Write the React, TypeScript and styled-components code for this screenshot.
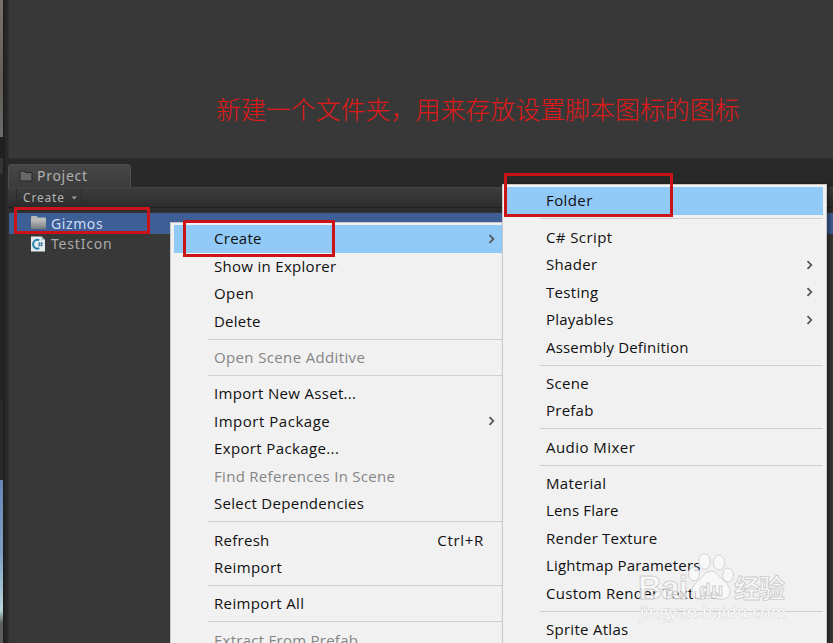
import React from 'react';
import styled, { createGlobalStyle } from 'styled-components';

const GlobalStyle = createGlobalStyle`
  * { box-sizing: border-box; }
  body { margin: 0; background: #292929; overflow: hidden; }
`;

const Editor = styled.div`
  position: relative;
  display: grid;
  grid-template-columns: 3px 5px 1fr;
  width: 833px;
  height: 643px;
  overflow: hidden;
  background: #292929;
  font-family: 'Noto Sans', sans-serif;
`;

const SceneEdge = styled.div`
  display: grid;
  grid-template-rows: 137px 21px 16px 227px 79px 1fr;
  height: 643px;
`;

const EdgeBlock = styled.div<{ $fill: string }>`
  background: ${p => p.$fill};
`;

const Gutter = styled.div`
  background: linear-gradient(90deg, #1c1c1c, #292929 70%);
`;

const Main = styled.div`
  display: flex;
  flex-direction: column;
  min-width: 0;
`;

const Preview = styled.div`
  height: 159px;
  flex: none;
  border-left: 1px solid #303030;
  border-bottom: 1px solid #2e2e2e;
  background: #383838;
`;

const Note = styled.p`
  margin: 0;
  padding: 89px 0 0 207px;
  color: #e01818;
  font: 300 24.95px/38px 'Noto Sans CJK SC', sans-serif;
  white-space: nowrap;
`;

const TabBar = styled.div`
  display: flex;
  align-items: flex-end;
  height: 28px;
  flex: none;
  background: #292929;
`;

const Tab = styled.div`
  display: flex;
  align-items: center;
  gap: 4px;
  width: 123px;
  height: 23px;
  padding: 0 0 0 10px;
  border: 1px solid #4e4e4e;
  border-bottom: 0;
  border-radius: 4px 4px 0 0;
  background: linear-gradient(#474747, #3b3b3b);
  color: #b0b0b0;
  font-size: 14px;
  line-height: 20px;
  letter-spacing: 0.72px;
`;

const Toolbar = styled.div`
  display: flex;
  height: 21px;
  flex: none;
  padding-left: 8px;
  border-top: 1px solid #434343;
  border-bottom: 1px solid #1f1f1f;
  background: linear-gradient(#3d3d3d, #2c2c2c);
`;

const ToolButton = styled.div`
  display: flex;
  align-items: center;
  gap: 6px;
  width: 66px;
  padding-left: 6px;
  border: solid #2b2b2b;
  border-width: 0 1px;
  color: #b4b4b4;
  font-size: 12px;
  letter-spacing: 0.8px;
`;

const AssetList = styled.div`
  flex: 1;
  padding-top: 5px;
  border-left: 1px solid #303030;
  background: linear-gradient(#2c2c2c 0 3px, #383838 6px);
`;

const AssetRow = styled.div<{ $selected?: boolean }>`
  display: flex;
  align-items: center;
  gap: 4px;
  height: 20.5px;
  padding-left: 21px;
  background: ${p => (p.$selected ? '#3e5f96' : 'transparent')};
  color: ${p => (p.$selected ? '#cddcf5' : '#aaaaaa')};
  font-size: 14px;
  letter-spacing: ${p => (p.$selected ? 0.6 : 0.8)}px;
  line-height: 20px;
`;

const AssetName = styled.span<{ $drop?: number }>`
  padding-top: ${p => p.$drop ?? 0}px;
`;

const Menu = styled.div`
  position: absolute;
  border: 1px solid #c9c9c9;
  background: #f1f1f1;
  color: #101010;
  font: 15px/27px 'Open Sans', sans-serif;
  overflow: hidden;
`;

const ContextMenu = styled(Menu)`
  left: 170px;
  top: 222px;
  width: 333px;
  height: 440px;
  padding: 2px 0 0 3px;
`;

const SubMenu = styled(Menu)`
  left: 502px;
  top: 184px;
  width: 325px;
  height: 480px;
  padding: 2px 3px 0;
  box-shadow: 3px 0 4px rgba(0, 0, 0, 0.4);
`;

const MenuRow = styled.div<{ $active?: boolean; $disabled?: boolean }>`
  display: flex;
  align-items: center;
  height: 27.5px;
  padding: 0 6px 0 40px;
  background: ${p => (p.$active ? '#91c9f7' : 'transparent')};
  color: ${p => (p.$disabled ? '#858585' : 'inherit')};
  white-space: nowrap;

  ${SubMenu} & {
    padding-right: 9px;
  }
`;

const Label = styled.span<{ $spacing: number }>`
  flex: 1;
  letter-spacing: ${p => p.$spacing}px;
`;

const Shortcut = styled.span`
  padding-right: 12px;
  letter-spacing: 0.7px;
`;

const Separator = styled.div`
  display: flex;
  align-items: center;
  height: 8.75px;
  margin-left: 34px;

  &::before {
    content: '';
    flex: 1;
    height: 1px;
    background: #cfcfcf;
  }
`;

const Highlight = styled.div<{ $x: number; $y: number; $w: number; $h: number }>`
  position: absolute;
  left: ${p => p.$x}px;
  top: ${p => p.$y}px;
  width: ${p => p.$w}px;
  height: ${p => p.$h}px;
  border: 3px solid #cb1219;
`;

const Watermark = styled.svg`
  position: absolute;
  left: 632px;
  top: 546px;
`;

const Arrow = () => (
  <svg width="9" height="12" viewBox="0 0 9 12" fill="none">
    <path d="M2.5 2.2 L6.3 6 L2.5 9.800" stroke="#505050" strokeWidth="1.7" />
  </svg>
);

const TabFolder = () => (
  <svg width="14" height="12" viewBox="0 0 14 12">
    <path d="M1 2.2 Q1 1 2 1 H5.3 L6.5 2.6 H12 Q13 2.6 13 3.6 V10 Q13 11 12 11 H2 Q1 11 1 10 Z" fill="#686868" stroke="#202020" />
  </svg>
);

const FolderIcon = () => (
  <svg width="17" height="16" viewBox="0 0 17 16">
    <defs>
      <linearGradient id="folderFront" x1="0" y1="0" x2="0" y2="1">
        <stop offset="0" stopColor="#c4c6c4" />
        <stop offset="1" stopColor="#777b7d" />
      </linearGradient>
    </defs>
    <path d="M1 2 Q1 1 2 1 H6.5 L8 2.5 H15 Q16 2.5 16 3.5 V13 H1 Z" fill="#b9bab7" />
    <path d="M1 5 Q7 5.5 9 3.8 H16 V13 Q16 14 15 14 H2 Q1 14 1 13 Z" fill="url(#folderFront)" />
  </svg>
);

const ScriptIcon = () => (
  <svg width="17" height="18" viewBox="0 0 17 18">
    <path d="M1 1.5 H11.5 L15 5 V16.5 H1 Z" fill="#e5edf0" />
    <path d="M11.5 1.5 V5 H15" fill="#a9bdc7" />
    <path d="M9.3 5.2 A4.4 4.4 0 1 0 9.3 13.2" fill="none" stroke="#2783ab" strokeWidth="2" />
    <path d="M9.6 7 L9.2 11.6 M11.8 7 L11.4 11.6 M8.2 8.3 H13 M8 10.3 H12.8" stroke="#2c7596" strokeWidth="0.8" />
  </svg>
);

const DropTriangle = () => (
  <svg width="7" height="4" viewBox="0 0 7 4">
    <path d="M0.5 0.5 H6 L3.25 3.5 Z" fill="#9c9c9c" />
  </svg>
);

type Entry = {
  text: string;
  spacing: number;
  arrow?: boolean;
  active?: boolean;
  disabled?: boolean;
  shortcut?: string;
};

const assetMenu: Entry[][] = [
  [
    { text: 'Create', spacing: 0.28, arrow: true, active: true },
    { text: 'Show in Explorer', spacing: 0.3 },
    { text: 'Open', spacing: 0.45 },
    { text: 'Delete', spacing: 0.22 },
  ],
  [{ text: 'Open Scene Additive', spacing: 0.36, disabled: true }],
  [
    { text: 'Import New Asset...', spacing: 0.32 },
    { text: 'Import Package', spacing: 0.52, arrow: true },
    { text: 'Export Package...', spacing: 0.37 },
    { text: 'Find References In Scene', spacing: 0.3, disabled: true },
    { text: 'Select Dependencies', spacing: 0.29 },
  ],
  [
    { text: 'Refresh', spacing: 0.27, shortcut: 'Ctrl+R' },
    { text: 'Reimport', spacing: 0.4 },
  ],
  [{ text: 'Reimport All', spacing: 0.36 }],
  [{ text: 'Extract From Prefab', spacing: 0.26, disabled: true }],
];

const createMenu: Entry[][] = [
  [{ text: 'Folder', spacing: 0.4, active: true }],
  [
    { text: 'C# Script', spacing: 0.4 },
    { text: 'Shader', spacing: 0.35, arrow: true },
    { text: 'Testing', spacing: 0.32, arrow: true },
    { text: 'Playables', spacing: 0.22, arrow: true },
    { text: 'Assembly Definition', spacing: 0.19 },
  ],
  [
    { text: 'Scene', spacing: 0.3 },
    { text: 'Prefab', spacing: 0.25 },
  ],
  [{ text: 'Audio Mixer', spacing: 0.46 }],
  [
    { text: 'Material', spacing: 0.35 },
    { text: 'Lens Flare', spacing: 0.17 },
    { text: 'Render Texture', spacing: 0.23 },
    { text: 'Lightmap Parameters', spacing: 0.2 },
    { text: 'Custom Render Texture', spacing: 0.29 },
  ],
  [{ text: 'Sprite Atlas', spacing: 0.28 }],
];

const MenuGroups = ({ groups }: { groups: Entry[][] }) => (
  <>
    {groups.map((group, i) => (
      <React.Fragment key={i}>
        {i > 0 && <Separator />}
        {group.map(e => (
          <MenuRow key={e.text} $active={e.active} $disabled={e.disabled}>
            <Label $spacing={e.spacing}>{e.text}</Label>
            {e.shortcut && <Shortcut>{e.shortcut}</Shortcut>}
            {e.arrow && <Arrow />}
          </MenuRow>
        ))}
      </React.Fragment>
    ))}
  </>
);

export default function App() {
  return (
    <>
      <GlobalStyle />
      <Editor>
        <SceneEdge>
          <EdgeBlock $fill="linear-gradient(#7b716a, #625c56 60%, #6b6b69)" />
          <EdgeBlock $fill="#202020" />
          <EdgeBlock $fill="#343434" />
          <EdgeBlock $fill="#242424" />
          <EdgeBlock $fill="none" />
          <EdgeBlock $fill="linear-gradient(#6487b7, #7fa0c4 45%, #b7d5d8 80%, #5d5d5d 88%)" />
        </SceneEdge>
        <Gutter />
        <Main>
          <Preview>
            <Note>新建一个文件夹，用来存放设置脚本图标的图标</Note>
          </Preview>
          <TabBar>
            <Tab>
              <TabFolder />
              Project
            </Tab>
          </TabBar>
          <Toolbar>
            <ToolButton>
              Create
              <DropTriangle />
            </ToolButton>
          </Toolbar>
          <AssetList>
            <AssetRow $selected>
              <FolderIcon />
              <AssetName $drop={2}>Gizmos</AssetName>
            </AssetRow>
            <AssetRow>
              <ScriptIcon />
              <AssetName $drop={1}>TestIcon</AssetName>
            </AssetRow>
          </AssetList>
        </Main>

        <ContextMenu>
          <MenuGroups groups={assetMenu} />
        </ContextMenu>
        <SubMenu>
          <MenuGroups groups={createMenu} />
        </SubMenu>

        <Highlight $x={14} $y={207} $w={136} $h={27} />
        <Highlight $x={183} $y={220} $w={152} $h={37} />
        <Highlight $x={504} $y={173} $w={169} $h={44} />

        <Watermark width="165" height="82" viewBox="0 0 165 82">
          <g fill="#fafafa" fillOpacity="0.78" stroke="#cdcdcd" strokeWidth="0.9">
            <text x="6" y="53" fontFamily="Liberation Sans" fontWeight="700" fontSize="33" textLength="50">Bai</text>
            <ellipse cx="72.500" cy="15.500" rx="5.800" ry="7.800" />
            <ellipse cx="87" cy="16.500" rx="5.600" ry="7.500" />
            <ellipse cx="62" cy="28" rx="5.500" ry="7" />
            <ellipse cx="96" cy="29" rx="5.500" ry="7" />
            <path d="M79 25 C85 25 87 31 92 35 C102 43 99 55 87 53 C81 52 77 52 71 53 C59 55 55 43 66 35 C71 31 73 25 79 25 Z" />
            <text x="67" y="50" fontFamily="Liberation Sans" fontWeight="700" fontSize="19" textLength="24">du</text>
            <text x="102" y="52" fontFamily="Noto Sans CJK SC" fontWeight="700" fontSize="26" textLength="51">经验</text>
          </g>
          <text x="8" y="72" fontFamily="Open Sans" fontSize="16.500" textLength="146" fill="#fcfcfc" stroke="#d2d2d2" strokeWidth="1" paintOrder="stroke">jingyan.baidu.com</text>
        </Watermark>
      </Editor>
    </>
  );
}
